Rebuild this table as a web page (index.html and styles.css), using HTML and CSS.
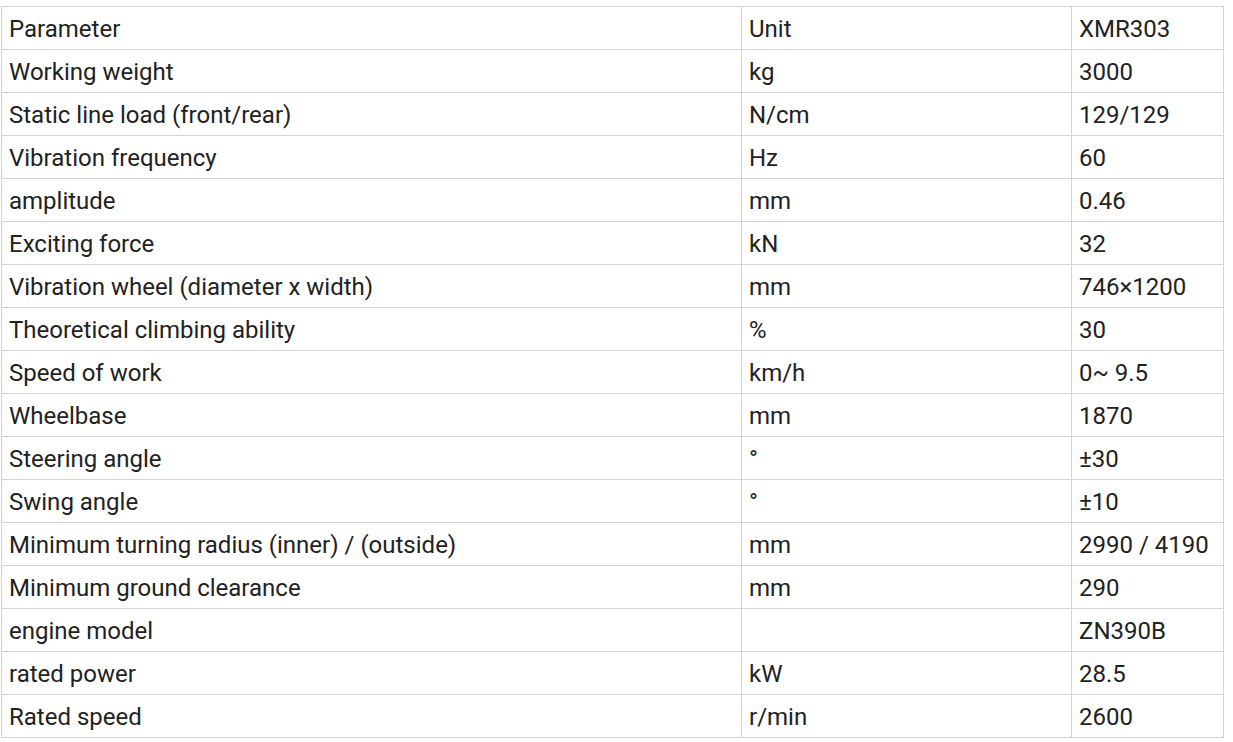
FILE: index.html
```html
<!DOCTYPE html>
<html>
<head>
<meta charset="utf-8">
<link rel="stylesheet" href="styles.css">
</head>
<body>
<table class="spec">
<colgroup><col class="c1"><col class="c2"><col class="c3"></colgroup>
<tbody>
<tr><td>Parameter</td><td>Unit</td><td>XMR303</td></tr>
<tr><td>Working weight</td><td>kg</td><td>3000</td></tr>
<tr><td>Static line load (front/rear)</td><td>N/cm</td><td>129/129</td></tr>
<tr><td>Vibration frequency</td><td>Hz</td><td>60</td></tr>
<tr><td>amplitude</td><td>mm</td><td>0.46</td></tr>
<tr><td>Exciting force</td><td>kN</td><td>32</td></tr>
<tr><td>Vibration wheel (diameter x width)</td><td>mm</td><td>746×1200</td></tr>
<tr><td>Theoretical climbing ability</td><td>%</td><td>30</td></tr>
<tr><td>Speed of work</td><td>km/h</td><td>0~ 9.5</td></tr>
<tr><td>Wheelbase</td><td>mm</td><td>1870</td></tr>
<tr><td>Steering angle</td><td>°</td><td>±30</td></tr>
<tr><td>Swing angle</td><td>°</td><td>±10</td></tr>
<tr><td>Minimum turning radius (inner) / (outside)</td><td>mm</td><td>2990 / 4190</td></tr>
<tr><td>Minimum ground clearance</td><td>mm</td><td>290</td></tr>
<tr><td>engine model</td><td></td><td>ZN390B</td></tr>
<tr><td>rated power</td><td>kW</td><td>28.5</td></tr>
<tr><td>Rated speed</td><td>r/min</td><td>2600</td></tr>
</tbody>
</table>
</body>
</html>
```
FILE: styles.css
```css
html, body {
  margin: 0;
  padding: 0;
  background: #ffffff;
}
body {
  padding: 6px 10px 0 1px;
  font-family: Roboto, "Liberation Sans", sans-serif;
  color: #222222;
}
.spec {
  border-collapse: collapse;
  table-layout: fixed;
  width: 1222px;
  font-size: 24px;
}
.c1 { width: 740px; }
.c2 { width: 330px; }
.c3 { width: 152px; }
.spec td {
  border: 1px solid #d4d4d4;
  height: 42px;
  padding: 2px 0 0 7px;
  box-sizing: border-box;
  vertical-align: middle;
  white-space: nowrap;
  line-height: 40px;
  overflow: hidden;
}
```
